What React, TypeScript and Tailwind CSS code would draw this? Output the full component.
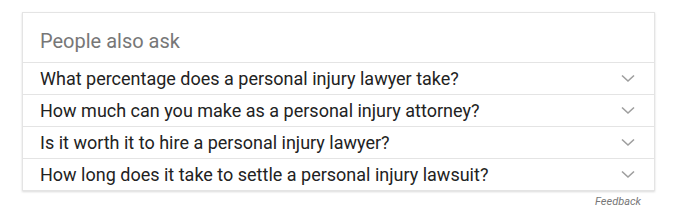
const questions = [
  "What percentage does a personal injury lawyer take?",
  "How much can you make as a personal injury attorney?",
  "Is it worth it to hire a personal injury lawyer?",
  "How long does it take to settle a personal injury lawsuit?",
];

function Chevron() {
  return (
    <svg width="14" height="9" viewBox="0 0 14 9" fill="none" className="shrink-0">
      <polyline points="1,1.5 7,7 13,1.5" stroke="#9e9e9e" strokeWidth="1.6" />
    </svg>
  );
}

export default function App() {
  return (
    <div className="w-[673px] h-[213px] bg-white pt-3 pl-[22px] font-['Roboto',sans-serif]">
      <div className="w-[633px] border border-[#e4e4e4] shadow-[0_1px_2px_rgba(0,0,0,0.15)]">
        <div className="h-[49px] pl-[17px] pt-[16px] text-[20px] leading-[24px] text-[#777]">
          People also ask
        </div>
        {questions.map((q) => (
          <div
            key={q}
            className="h-[32px] border-t border-[#e4e4e4] pl-[17px] pr-[19px] flex items-center justify-between"
          >
            <span className="text-[18px] leading-[22px] text-[#222]">{q}</span>
            <Chevron />
          </div>
        ))}
      </div>
      <div className="w-[633px] pr-[14px] pt-[3px] text-right text-[11px] italic text-[#777]">Feedback</div>
    </div>
  );
}
